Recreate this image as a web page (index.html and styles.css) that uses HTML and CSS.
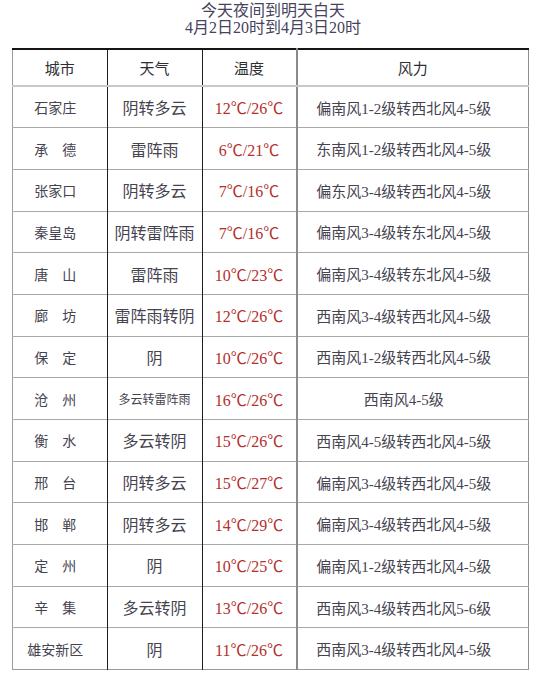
FILE: index.html
```html
<!DOCTYPE html>
<html lang="zh-CN">
<head>
<meta charset="utf-8">
<title>今天夜间到明天白天</title>
<link rel="stylesheet" href="styles.css">
</head>
<body>
<div class="page">
  <header class="title">
    <div>今天夜间到明天白天</div>
    <div>4月2日20时到4月3日20时</div>
  </header>
  <table class="forecast">
    <colgroup>
      <col class="c-city"><col class="c-weather"><col class="c-temp"><col class="c-wind">
    </colgroup>
    <thead>
      <tr><th class="city">城市</th><th class="weather">天气</th><th class="temp">温度</th><th class="wind">风力</th></tr>
    </thead>
    <tbody>
      <tr><td class="city">石家庄</td><td class="weather">阴转多云</td><td class="temp">12℃/26℃</td><td class="wind">偏南风1-2级转西北风4-5级</td></tr>
      <tr><td class="city">承　德</td><td class="weather">雷阵雨</td><td class="temp">6℃/21℃</td><td class="wind">东南风1-2级转西北风4-5级</td></tr>
      <tr><td class="city">张家口</td><td class="weather">阴转多云</td><td class="temp">7℃/16℃</td><td class="wind">偏东风3-4级转西北风4-5级</td></tr>
      <tr><td class="city">秦皇岛</td><td class="weather">阴转雷阵雨</td><td class="temp">7℃/16℃</td><td class="wind">偏南风3-4级转东北风4-5级</td></tr>
      <tr><td class="city">唐　山</td><td class="weather">雷阵雨</td><td class="temp">10℃/23℃</td><td class="wind">偏南风3-4级转东北风4-5级</td></tr>
      <tr><td class="city">廊　坊</td><td class="weather">雷阵雨转阴</td><td class="temp">12℃/26℃</td><td class="wind">西南风3-4级转西北风4-5级</td></tr>
      <tr><td class="city">保　定</td><td class="weather">阴</td><td class="temp">10℃/26℃</td><td class="wind">西南风1-2级转西北风4-5级</td></tr>
      <tr><td class="city">沧　州</td><td class="weather small">多云转雷阵雨</td><td class="temp">16℃/26℃</td><td class="wind">西南风4-5级</td></tr>
      <tr><td class="city">衡　水</td><td class="weather">多云转阴</td><td class="temp">15℃/26℃</td><td class="wind">西南风4-5级转西北风4-5级</td></tr>
      <tr><td class="city">邢　台</td><td class="weather">阴转多云</td><td class="temp">15℃/27℃</td><td class="wind">偏南风3-4级转西北风4-5级</td></tr>
      <tr><td class="city">邯　郸</td><td class="weather">阴转多云</td><td class="temp">14℃/29℃</td><td class="wind">偏南风3-4级转西北风4-5级</td></tr>
      <tr><td class="city">定　州</td><td class="weather">阴</td><td class="temp">10℃/25℃</td><td class="wind">偏南风1-2级转西北风4-5级</td></tr>
      <tr><td class="city">辛　集</td><td class="weather">多云转阴</td><td class="temp">13℃/26℃</td><td class="wind">西南风3-4级转西北风5-6级</td></tr>
      <tr><td class="city">雄安新区</td><td class="weather">阴</td><td class="temp">11℃/26℃</td><td class="wind">西南风3-4级转西北风4-5级</td></tr>
    </tbody>
  </table>
</div>
</body>
</html>
```

FILE: styles.css
```css
html, body {
  margin: 0;
  padding: 0;
  background: #ffffff;
}

body {
  font-family: "Liberation Serif", "Noto Sans CJK SC", serif;
  color: #45434f;
}

.page {
  width: 538px;
  height: 683px;
  overflow: hidden;
}

.title {
  height: 48px;
  box-sizing: border-box;
  padding-top: 2px;
  text-align: center;
  font-size: 16px;
  line-height: 17px;
  color: #46435c;
  padding-left: 8px;
}

.forecast {
  margin-left: 12px;
  width: 517px;
  border-collapse: collapse;
  table-layout: fixed;
  border-top: 2px solid #151515;
  border-left: 1px solid #9a9a9a;
  border-right: 1px solid #8e8e8e;
  border-bottom: 1px solid #9a9a9a;
}

.c-city { width: 94.5px; }
.c-weather { width: 95px; }
.c-temp { width: 94.5px; }
.c-wind { width: auto; }

.forecast th,
.forecast td {
  padding: 0;
  text-align: center;
  vertical-align: middle;
  white-space: nowrap;
  font-weight: normal;
}

.forecast thead tr {
  height: 37px;
}

.forecast th {
  font-size: 15px;
  color: #2e2e33;
  border-bottom: 2px solid #c8c8c8;
}

.forecast tbody tr {
  height: 41.7px;
}

.forecast td {
  border-top: 1px solid #a9a9a9;
}

.city {
  border-right: 1px solid #1e1e1e;
}

.weather {
  border-right: 1px solid #1e1e1e;
}

.temp {
  border-right: 2px solid #8a8a8a;
}

td.city {
  font-size: 14px;
  padding-right: 9px;
}

td.weather {
  font-size: 16px;
}

td.weather.small {
  font-size: 12px;
}

td.temp {
  font-size: 16px;
  color: #b3302c;
}

td.wind {
  font-size: 15px;
  padding-right: 18px;
}
```
